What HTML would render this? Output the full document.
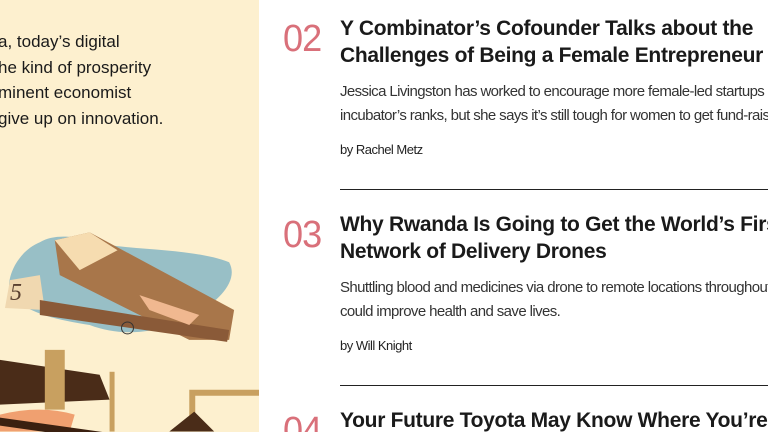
<!DOCTYPE html><html><head><style>
body{margin:0;width:768px;height:432px;overflow:hidden;background:#fff;font-family:"Liberation Sans",sans-serif;position:relative}
.l{position:absolute;left:0;top:0;width:259px;height:432px;background:#fdf0cf;overflow:hidden}
.lt{position:absolute;left:-2px;top:29px;font-size:17px;line-height:25.7px;color:#1a1a1a;white-space:nowrap;letter-spacing:0px}
.item{position:absolute;left:283px;white-space:nowrap;width:485px;height:200px;overflow:hidden}
.n{position:absolute;left:0;top:3px;font-size:38px;color:#d9707a;line-height:40px;letter-spacing:-1px;transform:scaleX(0.95);transform-origin:left}
.h{position:absolute;left:57px;top:0;font-size:21px;font-weight:bold;line-height:26.5px;color:#1a1a1a;letter-spacing:-0.3px}
.d{position:absolute;left:57px;font-size:15px;line-height:24px;color:#333;letter-spacing:-0.6px}
.b{position:absolute;left:57px;font-size:13px;color:#222;letter-spacing:-0.5px}
.hr{position:absolute;left:340px;right:0;height:1px;background:#222}
</style></head><body>
<div class="l">
<div class="lt">a, today’s digital<br>he kind of prosperity<br>minent economist<br>give up on innovation.</div>
<svg width="259" height="232" style="position:absolute;left:0;top:200px" viewBox="0 0 260 232">
<path d="M40 42 C60 30 90 40 110 45 C150 50 200 50 230 62 C240 80 220 100 200 112 C170 130 130 140 90 125 C60 120 30 115 10 95 C5 75 20 50 40 42Z" fill="#8db9c4" opacity="0.9"/>
<polygon points="55,40 90,32 235,110 230,140 190,140 60,75" fill="#a8764a"/>
<polygon points="55,40 90,32 118,50 80,70" fill="#f6dcb0"/>
<polygon points="10,80 40,75 45,110 5,108" fill="#f0d8b0"/>
<text x="10" y="100" font-size="24" font-style="italic" fill="#5a4030" font-family="Liberation Serif">5</text>
<polygon points="40,100 230,130 228,142 40,115" fill="#8a5a38"/>
<polygon points="140,95 200,115 190,125 150,110" fill="#f0b890"/>
<circle cx="128" cy="128" r="6" fill="none" stroke="#333"/>
<path d="M0 160 L100 175 L110 200 L0 205Z" fill="#4a2c18"/>
<rect x="45" y="150" width="20" height="60" fill="#c8a060"/>
<rect x="110" y="172" width="5" height="60" fill="#c8a060"/>
<path d="M190 232 L190 190 L260 190 L260 196 L196 196 L196 232Z" fill="#c8a060"/>
<path d="M170 232 L195 212 L215 232Z" fill="#4a2c18"/>
<path d="M0 215 Q40 205 75 215 L70 232 L0 232Z" fill="#f0a070"/>
<rect x="0" y="218" width="130" height="8" fill="#3a2010" transform="rotate(8 0 218)"/>
</svg>
</div>
<div class="item" style="top:16px"><div class="n">02</div>
<div class="h">Y Combinator’s Cofounder Talks about the<br>Challenges of Being a Female Entrepreneur</div>
<div class="d" style="top:64px">Jessica Livingston has worked to encourage more female-led startups into the<br>incubator’s ranks, but she says it’s still tough for women to get fund-raising.</div>
<div class="b" style="top:126px">by Rachel Metz</div></div>
<div class="hr" style="top:189px"></div>
<div class="item" style="top:212px"><div class="n">03</div>
<div class="h">Why Rwanda Is Going to Get the World’s First<br>Network of Delivery Drones</div>
<div class="d" style="top:64px">Shuttling blood and medicines via drone to remote locations throughout the country<br>could improve health and save lives.</div>
<div class="b" style="top:126px">by Will Knight</div></div>
<div class="hr" style="top:385px"></div>
<div class="item" style="top:408px;height:24px"><div class="n">04</div>
<div class="h">Your Future Toyota May Know Where You’re Going</div></div>
</body></html>
